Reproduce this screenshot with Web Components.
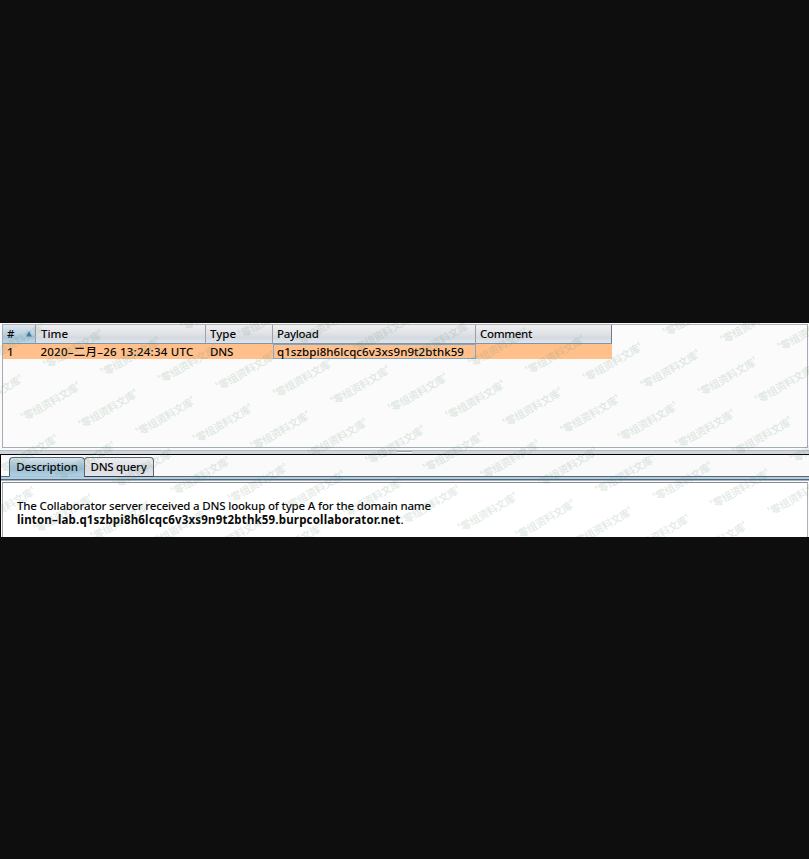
<!DOCTYPE html>
<html lang="zh"><head><meta charset="utf-8"><title>Collaborator</title>
<style>html,body{margin:0;background:#0e0e0e}body{height:859px;overflow:hidden}</style></head><body>
<collab-window></collab-window>
<script>
const sheet=(host,html)=>{host.attachShadow({mode:'open'}).innerHTML=html};

/* A run of text whose tracking is adjusted to a given width */
customElements.define('fit-text',class extends HTMLElement{
  connectedCallback(){
    sheet(this,`<style>:host{display:inline-block;white-space:pre}span{display:inline-block}</style><span><slot></slot></span>`);
    const s=this.shadowRoot.querySelector('span'),n=[...this.textContent].length,w=+this.getAttribute('w');
    s.style.letterSpacing=((w-s.getBoundingClientRect().width)/n)+'px';
  }});

customElements.define('head-cell',class extends HTMLElement{
  connectedCallback(){
    sheet(this,`<style>
    :host{display:flex;align-items:center;box-sizing:border-box;height:19px;padding:0 4px 1px;border-right:1px solid #9ba2ad;border-bottom:1px solid #8295a5;
      background:linear-gradient(#f0f0f1 0,#e2e3e7 45%,#d5dae1 70%,#dfe5ec)}
    :host([sorted]){background:linear-gradient(#dde6ee 0,#bfd3e1 45%,#a9c5d8 70%,#bcd8e9);justify-content:space-between;padding-right:3px}
    :host([last]){border-right-color:#737b87}
    svg{display:none}:host([sorted]) svg{display:block;margin-top:1px}
    </style><slot></slot><svg width="6" height="6" viewBox="0 0 6 6"><path d="M3 .2 6 5.6H0z" fill="#3b7cab"/></svg>`);
  }});

customElements.define('body-cell',class extends HTMLElement{
  connectedCallback(){
    sheet(this,`<style>
    :host{display:flex;align-items:center;box-sizing:border-box;height:15px;padding:0 5px 0 4px;background:#ffc08c}
    :host([focused]){box-shadow:inset 0 0 0 1px #7fa9c6}
    </style><slot></slot>`);
  }});

customElements.define('interaction-table',class extends HTMLElement{
  connectedCallback(){
    sheet(this,`<style>
    :host{display:block;box-sizing:border-box;height:124px;margin:1px 1px 0 2px;border:1px solid #a5aab3;border-color:#b1b5bb #a6a7b8 #a3aeb3 #a5aab3;background:#fbfbfb}
    .g{display:grid;grid-template-columns:33px 170px 67px 203px 136px;grid-template-rows:19px 15px}
    </style><div class="g">
    <head-cell sorted><fit-text w="8">#</fit-text></head-cell>
    <head-cell style="padding-left:5px"><fit-text w="27">Time</fit-text></head-cell>
    <head-cell><fit-text w="26">Type</fit-text></head-cell>
    <head-cell><fit-text w="41.5">Payload</fit-text></head-cell>
    <head-cell last><fit-text w="52">Comment</fit-text></head-cell>
    <body-cell><fit-text w="7">1</fit-text></body-cell>
    <body-cell style="padding-left:4.5px"><fit-text w="153">2020–二月–26 13:24:34 UTC</fit-text></body-cell>
    <body-cell><fit-text w="23">DNS</fit-text></body-cell>
    <body-cell focused><fit-text w="187">q1szbpi8h6lcqc6v3xs9n9t2bthk59</fit-text></body-cell>
    <body-cell></body-cell></div>`);
  }});

customElements.define('split-bar',class extends HTMLElement{
  connectedCallback(){
    sheet(this,`<style>:host{display:flex;justify-content:center;box-sizing:border-box;height:5px;margin-top:2px;border-top:1px solid #b4bbc1;border-bottom:1px solid #050505;background:#d0d5de}
    i{width:15px;height:1px;background:#9da8b2;border-bottom:1px solid #f5f7f9}</style><i></i>`);
  }});

customElements.define('tab-item',class extends HTMLElement{
  connectedCallback(){
    sheet(this,`<style>:host{display:flex;align-items:center;justify-content:center;box-sizing:border-box;height:20px;width:70px;border:1px solid #5d646e;border-bottom-color:#343b48;border-radius:4px 4px 0 0;background:linear-gradient(#eff0f3,#dadce3 55%,#e3e5ea);padding:0 1px 2px 0}
    :host([selected]){width:76px;padding-right:0;border-color:#4b6579;border-bottom-color:#a2c2d5;margin-right:-1px;background:linear-gradient(#dce6ed,#b4cddd 35%,#9dbed2 60%,#add0e5)}
    </style><slot></slot>`);
  }});

customElements.define('detail-pane',class extends HTMLElement{
  connectedCallback(){
    sheet(this,`<style>
    :host{display:flex;flex-direction:column;box-sizing:border-box;height:83px;overflow:hidden;background:#fafafa;border-left:1px solid #050505}
    nav{display:flex;padding:2px 0 0 8px;position:relative}
    .bar{flex:none;height:2px;border:solid #546879;border-width:1px 0;background:#b2cfe1;margin-top:-1px;box-shadow:0 1px #aab4bc}
    .page{flex:1;margin:2px 1px 0;border:1px solid #9199a4;border-color:#858c98 #aab3bd #fff #a0a5ae;border-bottom:0;background:#fff;padding:16px 14px 0;line-height:14px}
    span{display:block;height:14px}
    </style>
    <nav><tab-item selected><fit-text w="61.5">Description</fit-text></tab-item><tab-item><fit-text w="56">DNS query</fit-text></tab-item></nav>
    <div class="bar"></div>
    <div class="page"><span><fit-text w="414">The Collaborator server received a DNS lookup of type A for the domain name</fit-text></span>
    <span><fit-text w="383.5" style="font-weight:700">linton–lab.q1szbpi8h6lcqc6v3xs9n9t2bthk59.burpcollaborator.net</fit-text><fit-text w="3">.</fit-text></span></div>`);
  }});

/* Slanted marks repeated on a skewed lattice over the window */
customElements.define('water-mark',class extends HTMLElement{
  connectedCallback(){
    let t='';
    for(let r=-6;r<7;r++)for(let c=-8;c<19;c++){
      const x=23.7+57.45*c-22.5*r,y=99+7.25*c+52.4*r;
      if(x>-58&&x<806&&y>8&&y<242)t+=`<text transform="translate(${x.toFixed(1)} ${y.toFixed(1)}) rotate(-30)" textLength="67">'零组资料文库'</text>`;
    }
    sheet(this,`<style>:host{position:absolute;inset:0;pointer-events:none;overflow:hidden}svg{display:block}
    text{font:700 10.6px "Noto Sans CJK SC",sans-serif;fill:#5f8b6c;fill-opacity:.18}</style><svg width="809" height="214">${t}</svg>`);
  }});

customElements.define('collab-window',class extends HTMLElement{
  connectedCallback(){
    sheet(this,`<style>:host{display:block;padding-top:323px}
    section{position:relative;height:214px;overflow:hidden;display:flow-root;background:#fafafa;color:#080808;font:500 11.5px/15px "Noto Sans","Noto Sans CJK SC",sans-serif}
    </style><section><interaction-table></interaction-table><split-bar></split-bar><detail-pane></detail-pane><water-mark></water-mark></section>`);
  }});
</script></body></html>
